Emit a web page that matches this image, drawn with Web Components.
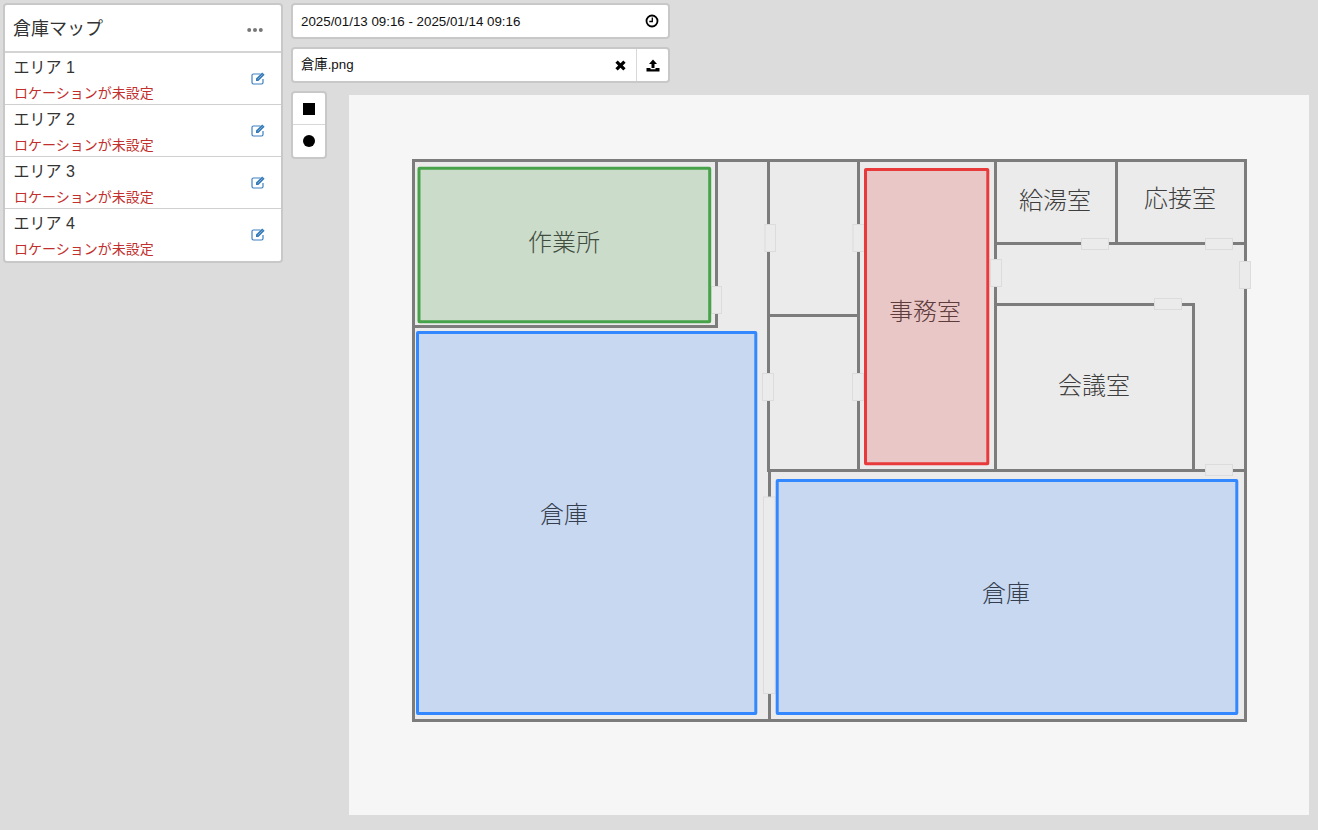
<!DOCTYPE html>
<html lang="ja"><head><meta charset="utf-8"><title>倉庫マップ</title>
<style>
html,body{margin:0;height:100%}
body{background:#dcdcdc;font-family:"Liberation Sans","Noto Sans CJK JP",sans-serif;color:#333}
</style></head><body>
<wh-app>
  <wh-side-panel slot="side" heading="倉庫マップ">
    <wh-area-row name="エリア 1" note="ロケーションが未設定"></wh-area-row>
    <wh-area-row name="エリア 2" note="ロケーションが未設定"></wh-area-row>
    <wh-area-row name="エリア 3" note="ロケーションが未設定"></wh-area-row>
    <wh-area-row name="エリア 4" note="ロケーションが未設定"></wh-area-row>
  </wh-side-panel>
  <wh-date-field slot="date" value="2025/01/13 09:16 - 2025/01/14 09:16"></wh-date-field>
  <wh-file-field slot="file" value="倉庫.png"></wh-file-field>
  <wh-shape-tools slot="tools"></wh-shape-tools>
  <wh-floor-map slot="map"></wh-floor-map>
</wh-app>
<script>
const FONT='"Liberation Sans","Noto Sans CJK JP",sans-serif';
const BOX=':host{display:block;box-sizing:border-box;border:2px solid rgba(0,0,0,.09);border-radius:4px;background:#fff;background-clip:padding-box;font-family:'+FONT+'}';
function def(name,render){customElements.define(name,class extends HTMLElement{connectedCallback(){if(this.shadowRoot)return;const r=this.attachShadow({mode:'open'});r.innerHTML=render(this)}})}

def('wh-app',()=>`<style>
:host{display:flex;gap:8px;padding:3px;align-items:flex-start}
.side{flex:0 0 280px}.main{flex:1;display:flex;flex-direction:column;gap:8px}
.row{display:flex;gap:22px;align-items:flex-start}
.narrow{width:379px;display:flex;flex-direction:column;gap:8px}
.map{margin-top:4px}
</style>
<div class="side"><slot name="side"></slot></div>
<div class="main"><div class="narrow"><slot name="date"></slot><slot name="file"></slot></div>
<div class="row"><slot name="tools"></slot><div class="map"><slot name="map"></slot></div></div></div>`);

def('wh-side-panel',h=>`<style>${BOX}
header{display:flex;align-items:center;justify-content:space-between;padding:2px 18px 0 8px;border-bottom:2px solid #d4d4d4;box-sizing:border-box;height:48px}
h1{margin:0;font-size:18px;font-weight:400;color:#333;line-height:1}
svg{display:block}
</style><header><h1>${h.getAttribute('heading')}</h1>
<svg width="16" height="4" viewBox="0 0 16 4" style="margin-top:1px"><g fill="#777"><circle cx="2.2" cy="2" r="2"/><circle cx="8" cy="2" r="2"/><circle cx="13.8" cy="2" r="2"/></g></svg></header><slot></slot>`);

def('wh-area-row',h=>`<style>
:host{display:flex;box-sizing:border-box;height:52px;align-items:center;justify-content:space-between;padding:0 15px 0 9px;border-bottom:1px solid #d0d0d0;font-family:${FONT}}
:host(:last-child){border-bottom:0;padding-bottom:1px}
.n{font-size:16px;line-height:20px;color:#333;margin-left:-.5px}
.e{font-size:14px;line-height:20px;color:#c2302e;margin-top:5px}
.t{display:flex;flex-direction:column;margin-top:4px}
svg{display:block}
</style><div class="t"><span class="n">${h.getAttribute('name')}</span><span class="e">${h.getAttribute('note')}</span></div>
<svg width="15" height="14" viewBox="0 0 15 14" style="margin-top:-2px"><path d="M9.600 3H2.400C1.600 3 1 3.600 1 4.400v7.200c0 .8.600 1.400 1.400 1.400h8.200c.8 0 1.400-.6 1.400-1.400V8" fill="none" stroke="#3f80c2" stroke-width="1.200"/><path d="M5 7.600 11.200 1.400l2.400 2.400-6.200 6.200H5z" fill="#337ab7"/><path d="M6.700 8.300 11.600 3.400" stroke="#8fb4da" stroke-width=".8" fill="none"/></svg>`);

def('wh-date-field',h=>`<style>${BOX}
:host{height:36px;display:flex;align-items:center;justify-content:space-between;padding:0 9px 0 8px;font-size:13.333px;color:#111}
svg{display:block}
</style><span>${h.getAttribute('value')}</span>
<svg width="14" height="14" viewBox="0 0 14 14"><circle cx="7" cy="7" r="5.500" fill="none" stroke="#000" stroke-width="1.800"/><path d="M7.300 3.500V7.500H4.300" fill="none" stroke="#000" stroke-width="1.300"/></svg>`);

def('wh-file-field',h=>`<style>${BOX}
:host{height:36px;display:flex;align-items:stretch;font-size:13.333px;color:#111}
.v{flex:1;display:flex;align-items:center;justify-content:space-between;padding:0 10px 0 8px}
.v span{margin-top:-3px}
.b{width:31px;border-left:1px solid #d8d8d8;display:flex;align-items:center;justify-content:center}
svg{display:block}
</style><div class="v"><span>${h.getAttribute('value')}</span>
<svg width="11" height="11" viewBox="0 0 11 11"><path d="M2.700 .4 5.500 3.200 8.300 .4 10.600 2.700 7.800 5.500 10.600 8.300 8.300 10.600 5.500 7.800 2.700 10.600 .4 8.300 3.200 5.500 .4 2.700z" fill="#000"/></svg></div>
<div class="b"><svg width="14" height="13" viewBox="0 0 14 13"><path d="M7 .5 11 5H8.500V9H5.500V5H3z" fill="#000"/><path d="M.5 9H4.500V10.200H9.500V9H13.500V12.500H.5z" fill="#000"/></svg></div>`);

def('wh-shape-tools',()=>`<style>${BOX}
:host{width:36px}
.b{height:31px;display:flex;align-items:center;justify-content:center}
.b+.b{border-top:1px solid #d8d8d8;height:32px}
i{display:block;width:12px;height:12px;background:#000}
i.c{border-radius:50%}
</style><div class="b"><i></i></div><div class="b"><i class="c"></i></div>`);

const walls=[[413.5,160.5,1245.5,160.5],[1245.5,160.5,1245.5,720.5],[413.5,720.5,1245.5,720.5],[413.5,160.5,413.5,720.5],
[716.5,160.5,716.5,326.5],[413.5,326.5,716.5,326.5],[768.5,160.5,768.5,470.5],[858.5,160.5,858.5,470.5],[768.5,315.5,858.5,315.5],
[995.5,160.5,995.5,470.5],[995.5,243.5,1245.5,243.5],[995.5,304.5,1193.5,304.5],[1193.5,304.5,1193.5,470.5],[1116.5,160.5,1116.5,243.5],
[768.5,470.5,1245.5,470.5],[769.5,470.5,769.5,720.5]];
const doors=[[765,224.5,10.500,27],[853,224.5,11,27],[711.5,286.5,10,27],[990.5,259.5,11,27],[1081.5,238.5,27,11],[1205.5,238.5,27,11],
[1239.5,261.5,11,27],[1154.5,298.5,27,11],[762.5,373.5,11,27],[852.5,373.5,11,27],[763.5,497,11.500,196.500],[1205.5,464.5,27,11]];
const areas=[[419,168.3,290.7,153.4,'#46a34a','#ccdccb'],[865.5,169.5,122.3,294.3,'#e83a3a','#e9c7c7'],[417.5,332.5,338.3,381,'#3388ff','#c8d8f0'],[777.2,480.5,459.600,233,'#3388ff','#c8d8f0']];
const labels=[['作業所',564,240,'#3f4d3f'],['事務室',925,309,'#5f3c3c'],['倉庫',564,512,'#353e4e'],['倉庫',1006,591,'#353e4e'],['給湯室',1055,198,'#3e3e3e'],['応接室',1180,196,'#3e3e3e'],['会議室',1094,383,'#3e3e3e']];
def('wh-floor-map',()=>`<style>
:host{display:block;width:960px;height:720px;background:#f6f6f6}
svg{display:block}
text{font-family:"Noto Sans CJK JP",sans-serif;font-size:24px;font-weight:300;text-anchor:middle;dominant-baseline:central}
</style><svg width="960" height="720" viewBox="349 95 960 720">
<rect x="413.500" y="160.500" width="832" height="560" fill="#ebebeb"/>
${walls.map(w=>`<line x1="${w[0]}" y1="${w[1]}" x2="${w[2]}" y2="${w[3]}" stroke="#7c7c7c" stroke-width="3" stroke-linecap="square"/>`).join('')}
${doors.map(d=>`<rect x="${d[0]}" y="${d[1]}" width="${d[2]}" height="${d[3]}" fill="#ebebeb" stroke="#dcdcdc"/>`).join('')}
${areas.map(a=>`<rect x="${a[0]}" y="${a[1]}" width="${a[2]}" height="${a[3]}" rx=".5" fill="${a[5]}" stroke="${a[4]}" stroke-width="3"/>`).join('')}
${labels.map(l=>`<text x="${l[1]}" y="${l[2]}" fill="${l[3]}">${l[0]}</text>`).join('')}
</svg>`);
</script>
</body></html>
